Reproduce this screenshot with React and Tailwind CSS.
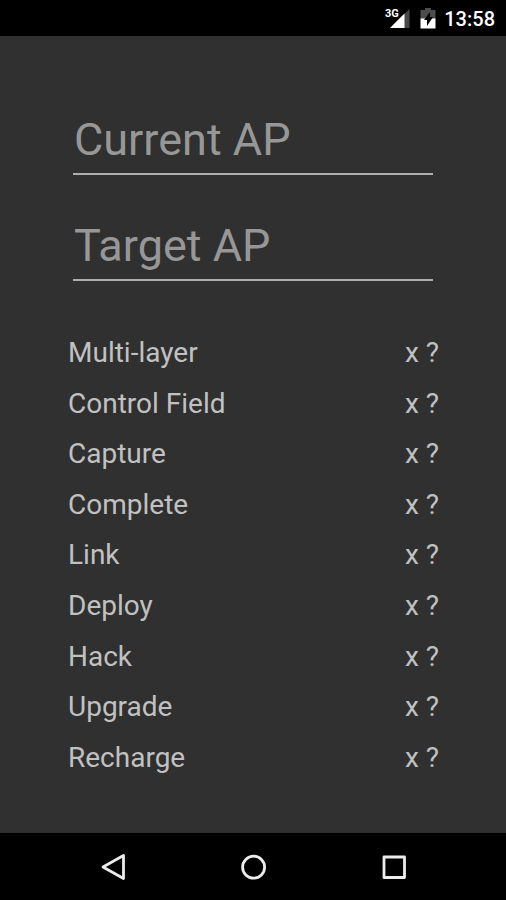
const actions = [
  "Multi-layer",
  "Control Field",
  "Capture",
  "Complete",
  "Link",
  "Deploy",
  "Hack",
  "Upgrade",
  "Recharge",
];

function StatusBar() {
  return (
    <header className="flex h-9 shrink-0 items-center justify-end bg-black pr-[11px] text-white">
      <svg className="h-6 w-7" viewBox="0 0 28 24" aria-hidden="true">
        <path d="M25.500 3v19H6z" fill="#484848" />
        <path d="M20.500 7.500V22H6z" fill="#fff" />
        <path d="M0 0h14.500v9L11 13H0z" fill="#000" />
        <text x="1" y="11" fill="#fff" fontSize="11" fontWeight="700" fontFamily="Roboto, sans-serif">3G</text>
      </svg>
      <svg className="ml-2 h-[22px] w-4" viewBox="0 0 16 22" aria-hidden="true">
        <path d="M5 1h6v2h4.500v9H.5V3H5z" fill="#4c4c4c" />
        <path d="M.5 11.500h15v10H.5z" fill="#fff" />
        <path d="M10 5v5h3l-6 9v-6H4z" fill="#000" />
      </svg>
      <time className="ml-2 pt-px text-[20px] leading-6 font-medium">13:58</time>
    </header>
  );
}

function ApField({ label }) {
  return (
    <input
      type="text"
      aria-label={label}
      placeholder={label}
      className="block h-16 w-full border-b-2 border-[#adadad] bg-transparent px-px pb-1.5 text-[45px] leading-[54px] text-[#c1c1c1] outline-none placeholder:text-[#979797]"
    />
  );
}

function NavButton({ label, children }) {
  return (
    <button type="button" aria-label={label} className="flex flex-1 items-center justify-center">
      <svg className="size-8" viewBox="0 0 32 32" fill="none" stroke="#ececec" strokeWidth="2.8" strokeLinejoin="round" aria-hidden="true">
        {children}
      </svg>
    </button>
  );
}

export default function App() {
  return (
    <div className="flex min-h-screen flex-col bg-[#303030] font-['Roboto',sans-serif]">
      <StatusBar />
      <main className="flex grow flex-col px-[67px] pt-[75px] pb-[50px]">
        <form className="flex flex-col gap-[42px] px-1.5">
          <ApField label="Current AP" />
          <ApField label="Target AP" />
        </form>
        <dl className="mt-[47px] grid grow auto-rows-fr pl-px text-[28px] leading-9 text-[#c1c1c1]">
          {actions.map((name) => (
            <div key={name} className="flex items-center justify-between">
              <dt>{name}</dt>
              <dd>x ?</dd>
            </div>
          ))}
        </dl>
      </main>
      <nav className="flex h-[67px] shrink-0 bg-black px-[43px]">
        <NavButton label="Back"><path d="M26.500 4.500v23L6 16z" /></NavButton>
        <NavButton label="Home"><circle cx="16.6" cy="16.200" r="11" /></NavButton>
        <NavButton label="Recent apps"><rect x="7" y="6" width="20.500" height="20.500" /></NavButton>
      </nav>
    </div>
  );
}
